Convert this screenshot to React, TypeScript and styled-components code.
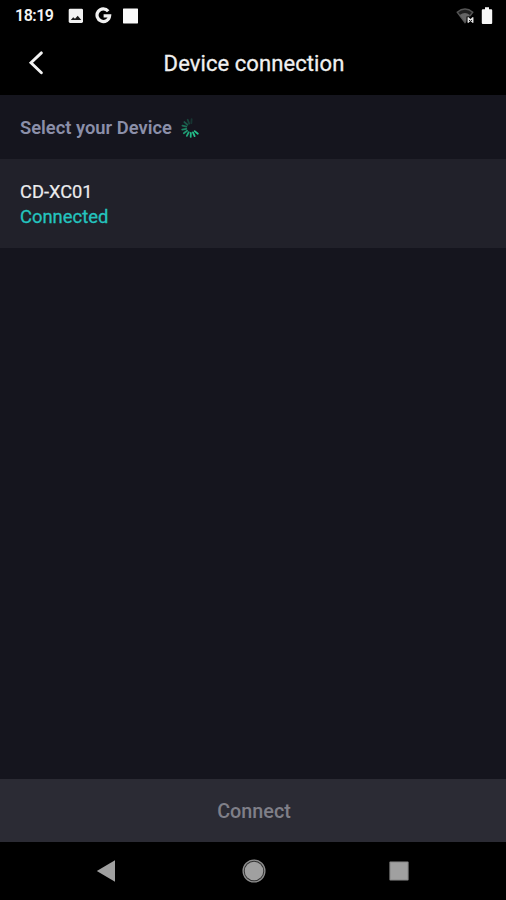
import React from 'react';
import styled, { createGlobalStyle } from 'styled-components';

const GlobalStyle = createGlobalStyle`
  * { box-sizing: border-box; }
  html, body { margin: 0; background: #000; }
  body { font-family: Roboto, "Liberation Sans", sans-serif; overflow: hidden; }
  svg { display: block; }
`;

const Screen = styled.div`
  width: 506px;
  height: 900px;
  display: flex;
  flex-direction: column;
  background: #15151e;
`;

const StatusBar = styled.header`
  height: 31px;
  padding-left: 15px;
  padding-right: 13px;
  display: flex;
  justify-content: space-between;
  align-items: center;
  background: #000;
`;

const StatusGroup = styled.div<{ $gap: number }>`
  height: 31px;
  display: flex;
  align-items: center;
  gap: ${({ $gap }) => $gap}px;
`;

const Clock = styled.time`
  width: 41px;
  margin-right: 1px;
  color: #f4f4f4;
  font-size: 16px;
  font-weight: 600;
  line-height: 31px;
  letter-spacing: -0.5px;
`;

const TitleBar = styled.div`
  height: 64px;
  display: grid;
  grid-template-columns: 72px 1fr 72px;
  align-items: center;
  background: #000;
`;

const BackButton = styled.button`
  height: 64px;
  padding: 0 0 0 28px;
  border: 0;
  background: none;
`;

const Title = styled.h1`
  margin: 0;
  padding: 2px 0 0 2px;
  text-align: center;
  color: #f0f0f0;
  font-size: 22px;
  font-weight: 400;
  line-height: 28px;
  letter-spacing: 0.08px;
  -webkit-text-stroke: 0.3px;
`;

const SectionHeader = styled.div`
  height: 64px;
  padding: 2px 0 0 20px;
  display: flex;
  align-items: center;
  gap: 9px;
`;

const SectionLabel = styled.h2`
  margin: 0;
  color: #8b8fa9;
  font-size: 18.35px;
  font-weight: 600;
  line-height: 24px;
`;

const DeviceRow = styled.div`
  height: 89px;
  padding: 20px 20px 0;
  background: #21212a;
`;

const DeviceName = styled.div`
  color: #ececee;
  font-size: 18.3px;
  line-height: 25px;
  -webkit-text-stroke: 0.2px;
`;

const DeviceState = styled.div`
  color: #24c4bf;
  font-size: 18.4px;
  line-height: 25px;
  -webkit-text-stroke: 0.3px;
`;

const EmptyArea = styled.main`
  flex: 1;
`;

const ConnectButton = styled.button`
  height: 63px;
  padding: 2px 0 0 2px;
  border: 0;
  background: #2b2b34;
  color: #7f7f88;
  font-family: inherit;
  font-size: 19.8px;
  font-weight: 500;
`;

const NavBar = styled.nav`
  height: 58px;
  display: grid;
  grid-template-columns: 212px 83px 208px;
  justify-items: center;
  align-items: center;
  background: #000;
`;

const ticks = Array.from({ length: 10 }, (_, i) => ({
  angle: 130 + i * 26,
  opacity: [1, 1, 0.95, 0.85, 0.75, 0.65, 0.52, 0.4, 0.28, 0.18][i],
}));

const Spinner = () => (
  <svg width="20" height="20" viewBox="-10 -10 20 20">
    {ticks.map(({ angle, opacity }) => (
      <path
        key={angle}
        d="M0-4.8V-8.9"
        transform={`rotate(${angle})`}
        stroke="#24c28c"
        strokeWidth="1.8"
        strokeLinecap="round"
        opacity={opacity}
      />
    ))}
  </svg>
);

export default function App() {
  return (
    <Screen>
      <GlobalStyle />
      <StatusBar>
        <StatusGroup $gap={11}>
          <Clock>18:19</Clock>
          <svg width="16" height="16" viewBox="0 0 16 16">
            <rect x=".7" y=".7" width="14.3" height="14.3" rx="1.4" fill="#f1f1f1" />
            <path d="M2.8 12 5.2 9.2l1.8 1.6 2.7-3 3.6 4.2z" fill="#181818" />
          </svg>
          <svg width="17" height="17" viewBox="0 0 17 17">
            <path
              d="M13.2 4.2A6.3 6.3 0 1 0 14.6 8.8H8.6"
              fill="none"
              stroke="#f1f1f1"
              strokeWidth="3.2"
            />
          </svg>
          <svg width="16" height="16" viewBox="0 0 16 16">
            <rect x="0" y=".4" width="15" height="15" rx=".6" fill="#fafafa" />
          </svg>
        </StatusGroup>
        <StatusGroup $gap={7}>
          <svg width="18" height="18" viewBox="0 0 18 18">
            <path d="M1.2 5.2Q9-1.4 16.8 5.2L9 15.5z" fill="#202020" stroke="#555" strokeWidth="1.4" />
            <path d="M3.7 8.1Q9 4.2 13.8 8L9 15z" fill="#646464" />
            <path d="M10.5 9.5H18V18H10.5z" fill="#000" />
            <path d="M12.3 10.2v5.6M16.7 10.2v5.6M12.3 11l4.4 4M12.3 15l4.4-4" stroke="#e8e8e8" strokeWidth="1.5" />
          </svg>
          <svg width="12" height="18" viewBox="0 0 12 18">
            <path d="M4 .2h4v2h2.2q1 0 1 1V16q0 1-1 1H1.8q-1 0-1-1V3.2q0-1 1-1H4z" fill="#f7f7f7" />
          </svg>
        </StatusGroup>
      </StatusBar>
      <TitleBar>
        <BackButton aria-label="Back">
          <svg width="18" height="26" viewBox="0 0 18 26">
            <path d="M13.4 2.9 3 12.8l10.4 9.9" fill="none" stroke="#f2f2f2" strokeWidth="2.9" strokeLinecap="round" />
          </svg>
        </BackButton>
        <Title>Device connection</Title>
      </TitleBar>
      <SectionHeader>
        <SectionLabel>Select your Device</SectionLabel>
        <Spinner />
      </SectionHeader>
      <DeviceRow>
        <DeviceName>CD-XC01</DeviceName>
        <DeviceState>Connected</DeviceState>
      </DeviceRow>
      <EmptyArea />
      <ConnectButton disabled>Connect</ConnectButton>
      <NavBar>
        <svg width="20" height="24" viewBox="0 0 20 24">
          <path d="M.8 12 19 1.3v21.4z" fill="#a0a0a0" />
        </svg>
        <svg width="24" height="24" viewBox="0 0 24 24">
          <circle cx="12" cy="12" r="10.9" fill="#303030" stroke="#8d8d8d" strokeWidth="1.3" />
          <circle cx="12" cy="12" r="9.3" fill="#a0a0a0" />
        </svg>
        <svg width="20" height="20" viewBox="0 0 20 20">
          <rect x=".4" y=".4" width="19.2" height="19.2" rx="1" fill="#8b8b8b" />
          <rect x="1.6" y="1.6" width="16.8" height="16.8" fill="#a0a0a0" />
        </svg>
      </NavBar>
    </Screen>
  );
}
